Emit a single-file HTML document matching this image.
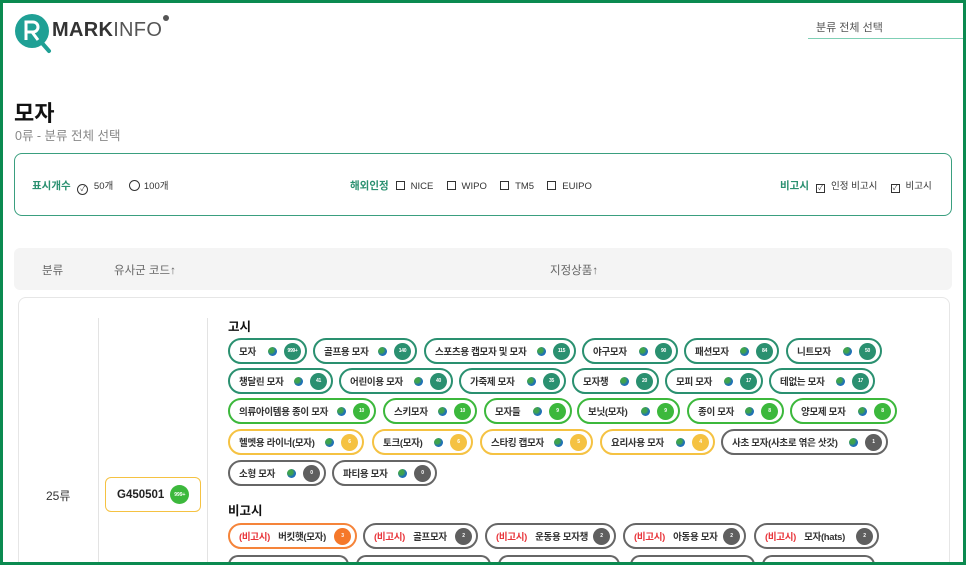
<!DOCTYPE html>
<html style="width:966px;height:565px;overflow:hidden"><head><meta charset="utf-8"><style>
*{box-sizing:border-box;margin:0;padding:0}
html,body{overflow:hidden}
body{width:966px;height:565px;overflow:hidden;background:#fff;font-family:"Liberation Sans","Noto Sans CJK KR",sans-serif;position:relative;color:#222}
.wrap{position:absolute;left:0;top:0;width:966px;height:565px;overflow:hidden}
.frame{position:absolute;left:0;top:0;width:966px;height:565px;border:3px solid #0b8a50;z-index:10;pointer-events:none}
.abs{position:absolute}
.chip{position:absolute;height:26px;border:2px solid #2a9070;border-radius:13px;display:flex;align-items:center;padding:0 4px 0 9px;font-size:9.5px;font-weight:bold;color:#333;white-space:nowrap;background:#fff;letter-spacing:-0.3px}
.chip .r{margin-left:auto;display:flex;align-items:center;gap:7px}
.g{width:9px;height:9px;border-radius:50%;background:radial-gradient(circle at 35% 35%,#3fa34d 0 30%,#1f6fb8 60%)}
.b{width:17px;height:17px;border-radius:50%;background:#2a9070;color:#fff;font-size:5px;display:flex;align-items:center;justify-content:center;font-weight:bold}
.t{border-color:#2a9070}
.gr{border-color:#3cb83c}.gr .b{background:#3cb83c}
.y{border-color:#f5c242}.y .b{background:#f5c242}
.k{border-color:#666}.k .b{background:#5f5f5f}
.o{border-color:#f5843a}.o .b{background:#f5782a}
.red{color:#e8343a;margin-right:8px}
.cb{display:inline-block;width:9px;height:9px;border:1.3px solid #333;vertical-align:-1px;margin-right:6px;font-size:7px;line-height:7px;text-align:center}
</style></head><body>
<div class="frame"></div>
<div class="wrap">
<svg class="abs" style="left:14px;top:13px" width="40" height="42" viewBox="0 0 40 42">
<circle cx="18" cy="18" r="17" fill="#1fa095"/>
<line x1="28" y1="30" x2="35" y2="38" stroke="#1fa095" stroke-width="4" stroke-linecap="round"/>
<path d="M12 27V9h7a5 5 0 0 1 0 10h-7M18 19l6 8" stroke="#fff" stroke-width="3" fill="none"/>
</svg>
<div class="abs" style="left:52px;top:19px;font-size:20px;letter-spacing:0.3px;color:#333"><b>MARK</b><span style="font-weight:normal;color:#555">INFO</span></div>
<div class="abs" style="left:163px;top:15px;width:6px;height:6px;border-radius:50%;background:#555"></div>
<div class="abs" style="left:816px;top:19px;font-size:11px;color:#555">분류 전체 선택</div>
<div class="abs" style="left:808px;top:38px;width:155px;height:1px;background:#7fcfb5"></div>

<div class="abs" style="left:14px;top:96px;font-size:22px;font-weight:bold;color:#111">모자</div>
<div class="abs" style="left:15px;top:125px;font-size:12.5px;color:#888">0류 - 분류 전체 선택</div>

<div class="abs" style="left:14px;top:153px;width:938px;height:63px;border:1.5px solid #3a9f7f;border-radius:8px;font-size:9.5px;color:#333">
 <div class="abs" style="left:17px;top:24px"><b style="color:#2a9070;font-size:10.5px">표시개수</b> <span style="display:inline-block;width:11px;height:11px;border:1.3px solid #333;border-radius:50%;vertical-align:-2px;margin:0 3px 0 4px;font-size:7px;text-align:center;line-height:9px">✓</span> 50개 <span style="display:inline-block;width:11px;height:11px;border:1.3px solid #333;border-radius:50%;vertical-align:-2px;margin:0 4px 0 13px"></span>100개</div>
 <div class="abs" style="left:335px;top:24px"><b style="color:#2a9070;font-size:10.5px;margin-right:7px">해외인정</b><span class="cb"></span>NICE&nbsp;&nbsp;&nbsp;&nbsp;&nbsp;<span class="cb"></span>WIPO&nbsp;&nbsp;&nbsp;&nbsp;&nbsp;<span class="cb"></span>TM5&nbsp;&nbsp;&nbsp;&nbsp;&nbsp;<span class="cb"></span>EUIPO</div>
 <div class="abs" style="left:765px;top:24px"><b style="color:#2a9070;font-size:10.5px;margin-right:7px">비고시</b><span class="cb">✓</span>인정 비고시&nbsp;&nbsp;&nbsp;&nbsp;&nbsp;<span class="cb">✓</span>비고시</div>
</div>

<div class="abs" style="left:14px;top:248px;width:938px;height:42px;background:#f4f4f4;border-radius:6px;font-size:11.5px;color:#666">
 <div class="abs" style="left:28px;top:14px">분류</div>
 <div class="abs" style="left:100px;top:14px">유사군 코드↑</div>
 <div class="abs" style="left:536px;top:14px">지정상품↑</div>
</div>

<div class="abs" style="left:18px;top:297px;width:932px;height:268px;border:1.5px solid #e6e6e6;border-bottom:none;border-radius:8px 8px 0 0"></div>
<div class="abs" style="left:98px;top:318px;width:1px;height:247px;background:#e3e3e3"></div>
<div class="abs" style="left:207px;top:318px;width:1px;height:247px;background:#e3e3e3"></div>
<div class="abs" style="left:46px;top:487px;font-size:12px;color:#333">25류</div>
<div class="abs" style="left:105px;top:477px;width:96px;height:35px;border:1.5px solid #f5c242;border-radius:6px;display:flex;align-items:center;padding-left:11px;font-size:11.5px;font-weight:bold;color:#222">G450501<span style="margin-left:6px;width:19px;height:19px;border-radius:50%;background:#3cb83c;color:#fff;font-size:5px;display:flex;align-items:center;justify-content:center">999+</span></div>

<div class="abs" style="left:228px;top:316px;font-size:12.5px;font-weight:bold;color:#111">고시</div>
<div class="abs" style="left:228px;top:500px;font-size:12.5px;font-weight:bold;color:#111">비고시</div>

<div class="chip t" style="left:228px;top:338px;width:79px">모자<span class="r"><i class="g"></i><span class="b">999+</span></span></div>
<div class="chip t" style="left:313px;top:338px;width:104px">골프용 모자<span class="r"><i class="g"></i><span class="b">140</span></span></div>
<div class="chip t" style="left:424px;top:338px;width:152px">스포츠용 캡모자 및 모자<span class="r"><i class="g"></i><span class="b">115</span></span></div>
<div class="chip t" style="left:582px;top:338px;width:96px">야구모자<span class="r"><i class="g"></i><span class="b">90</span></span></div>
<div class="chip t" style="left:684px;top:338px;width:95px">패션모자<span class="r"><i class="g"></i><span class="b">84</span></span></div>
<div class="chip t" style="left:786px;top:338px;width:96px">니트모자<span class="r"><i class="g"></i><span class="b">50</span></span></div>

<div class="chip t" style="left:228px;top:368px;width:105px">챙달린 모자<span class="r"><i class="g"></i><span class="b">41</span></span></div>
<div class="chip t" style="left:339px;top:368px;width:114px">어린이용 모자<span class="r"><i class="g"></i><span class="b">40</span></span></div>
<div class="chip t" style="left:459px;top:368px;width:107px">가죽제 모자<span class="r"><i class="g"></i><span class="b">35</span></span></div>
<div class="chip t" style="left:572px;top:368px;width:87px">모자챙<span class="r"><i class="g"></i><span class="b">20</span></span></div>
<div class="chip t" style="left:665px;top:368px;width:98px">모피 모자<span class="r"><i class="g"></i><span class="b">17</span></span></div>
<div class="chip t" style="left:769px;top:368px;width:106px">테없는 모자<span class="r"><i class="g"></i><span class="b">17</span></span></div>

<div class="chip gr" style="left:228px;top:398px;width:148px">의류아이템용 종이 모자<span class="r"><i class="g"></i><span class="b">10</span></span></div>
<div class="chip gr" style="left:383px;top:398px;width:94px">스키모자<span class="r"><i class="g"></i><span class="b">10</span></span></div>
<div class="chip gr" style="left:484px;top:398px;width:88px">모자들<span class="r"><i class="g"></i><span class="b">9</span></span></div>
<div class="chip gr" style="left:577px;top:398px;width:103px">보닛(모자)<span class="r"><i class="g"></i><span class="b">9</span></span></div>
<div class="chip gr" style="left:687px;top:398px;width:97px">종이 모자<span class="r"><i class="g"></i><span class="b">8</span></span></div>
<div class="chip gr" style="left:790px;top:398px;width:107px">양모제 모자<span class="r"><i class="g"></i><span class="b">8</span></span></div>

<div class="chip y" style="left:228px;top:429px;width:136px">헬멧용 라이너(모자)<span class="r"><i class="g"></i><span class="b">6</span></span></div>
<div class="chip y" style="left:372px;top:429px;width:101px">토크(모자)<span class="r"><i class="g"></i><span class="b">6</span></span></div>
<div class="chip y" style="left:480px;top:429px;width:113px">스타킹 캡모자<span class="r"><i class="g"></i><span class="b">5</span></span></div>
<div class="chip y" style="left:600px;top:429px;width:115px">요리사용 모자<span class="r"><i class="g"></i><span class="b">4</span></span></div>
<div class="chip k" style="left:721px;top:429px;width:167px">사초 모자(사초로 엮은 삿갓)<span class="r"><i class="g"></i><span class="b">1</span></span></div>

<div class="chip k" style="left:228px;top:460px;width:98px">소형 모자<span class="r"><i class="g"></i><span class="b">0</span></span></div>
<div class="chip k" style="left:332px;top:460px;width:105px">파티용 모자<span class="r"><i class="g"></i><span class="b">0</span></span></div>

<div class="chip o" style="left:228px;top:523px;width:129px"><span class="red">(비고시)</span>버킷햇(모자)<span class="r"><span class="b">3</span></span></div>
<div class="chip k" style="left:363px;top:523px;width:115px"><span class="red">(비고시)</span>골프모자<span class="r"><span class="b">2</span></span></div>
<div class="chip k" style="left:485px;top:523px;width:131px"><span class="red">(비고시)</span>운동용 모자챙<span class="r"><span class="b">2</span></span></div>
<div class="chip k" style="left:623px;top:523px;width:123px"><span class="red">(비고시)</span>아동용 모자<span class="r"><span class="b">2</span></span></div>
<div class="chip k" style="left:754px;top:523px;width:125px"><span class="red">(비고시)</span>모자(hats)<span class="r"><span class="b">2</span></span></div>

<div class="chip k" style="left:228px;top:555px;width:121px;height:10px;border-bottom:none;border-radius:13px 13px 0 0"></div>
<div class="chip k" style="left:356px;top:555px;width:135px;height:10px;border-bottom:none;border-radius:13px 13px 0 0"></div>
<div class="chip k" style="left:498px;top:555px;width:122px;height:10px;border-bottom:none;border-radius:13px 13px 0 0"></div>
<div class="chip k" style="left:630px;top:555px;width:125px;height:10px;border-bottom:none;border-radius:13px 13px 0 0"></div>
<div class="chip k" style="left:762px;top:555px;width:113px;height:10px;border-bottom:none;border-radius:13px 13px 0 0"></div>
</div>
</body></html>
